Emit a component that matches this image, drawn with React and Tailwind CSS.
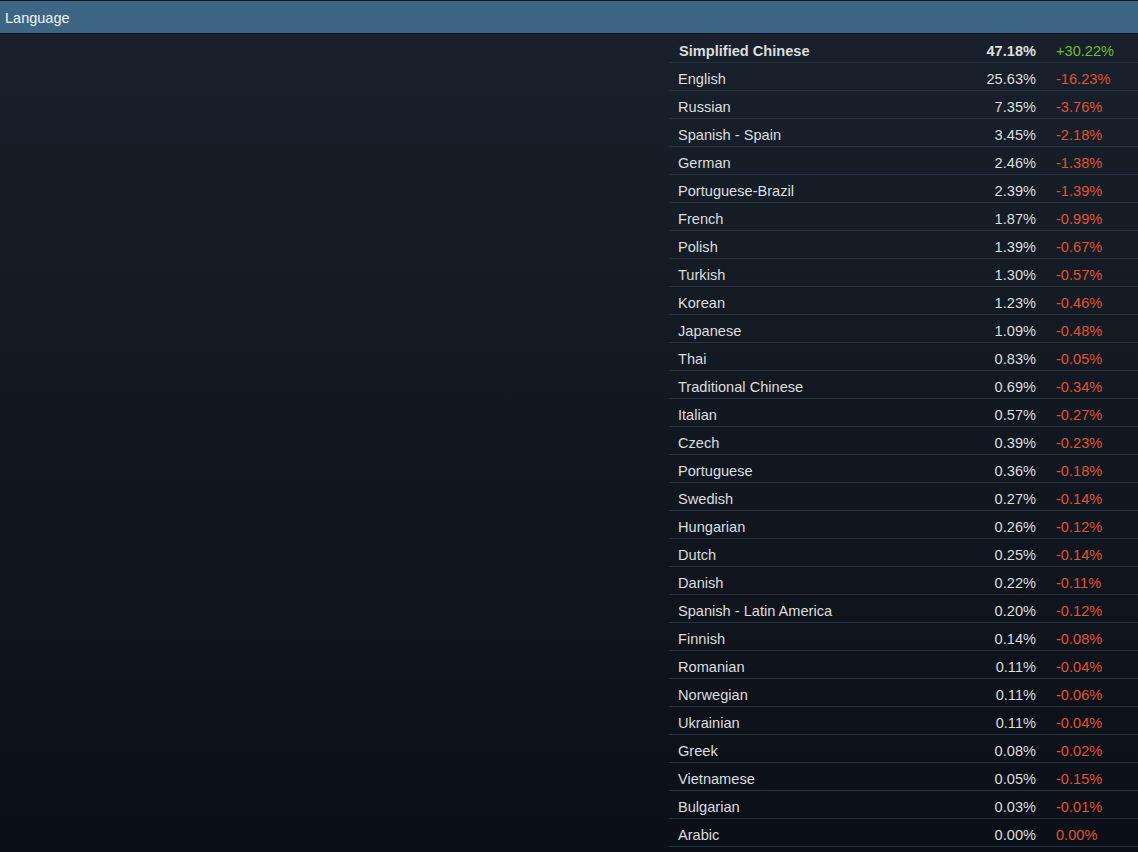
import React from 'react';

const ROWS = [
  ['Simplified Chinese', '47.18%', '+30.22%'],
  ['English', '25.63%', '-16.23%'],
  ['Russian', '7.35%', '-3.76%'],
  ['Spanish - Spain', '3.45%', '-2.18%'],
  ['German', '2.46%', '-1.38%'],
  ['Portuguese-Brazil', '2.39%', '-1.39%'],
  ['French', '1.87%', '-0.99%'],
  ['Polish', '1.39%', '-0.67%'],
  ['Turkish', '1.30%', '-0.57%'],
  ['Korean', '1.23%', '-0.46%'],
  ['Japanese', '1.09%', '-0.48%'],
  ['Thai', '0.83%', '-0.05%'],
  ['Traditional Chinese', '0.69%', '-0.34%'],
  ['Italian', '0.57%', '-0.27%'],
  ['Czech', '0.39%', '-0.23%'],
  ['Portuguese', '0.36%', '-0.18%'],
  ['Swedish', '0.27%', '-0.14%'],
  ['Hungarian', '0.26%', '-0.12%'],
  ['Dutch', '0.25%', '-0.14%'],
  ['Danish', '0.22%', '-0.11%'],
  ['Spanish - Latin America', '0.20%', '-0.12%'],
  ['Finnish', '0.14%', '-0.08%'],
  ['Romanian', '0.11%', '-0.04%'],
  ['Norwegian', '0.11%', '-0.06%'],
  ['Ukrainian', '0.11%', '-0.04%'],
  ['Greek', '0.08%', '-0.02%'],
  ['Vietnamese', '0.05%', '-0.15%'],
  ['Bulgarian', '0.03%', '-0.01%'],
  ['Arabic', '0.00%', '0.00%'],
];

export default function App() {
  return (
    <div
      className="w-[1138px] h-[852px] overflow-hidden bg-gradient-to-b from-[#18212c] to-[#0b0f17] text-[14.6px] text-[#dcdedf]"
      style={{ fontFamily: '"Liberation Sans", Arial, sans-serif' }}
    >
      {/* header bar */}
      <div className="h-[34px] border-t border-b border-[#0e141b] bg-[#3d6684] flex items-center px-[5px] pt-[3px] text-[14.5px] text-[#f0f4f7]">
        Language
      </div>

      <div className="flex pt-[1px]">
        <div className="flex-1" />
        <div className="w-[469px]">
          {ROWS.map(([name, pct, delta], i) => (
            <div
              key={name}
              className="flex items-center h-[28px] pt-[7px] border-b border-[#263240]"
            >
              <div className={`flex-1 pl-[9px] ${i === 0 ? 'font-bold pl-[10px]' : ''}`}>{name}</div>
              <div className={`text-right ${i === 0 ? 'font-bold' : ''}`}>{pct}</div>
              <div className={`w-[102px] pl-[20px] ${delta.startsWith('+') ? 'text-[#6dbf2e]' : 'text-[#e0532f]'}`}>
                {delta}
              </div>
            </div>
          ))}
        </div>
      </div>
    </div>
  );
}
